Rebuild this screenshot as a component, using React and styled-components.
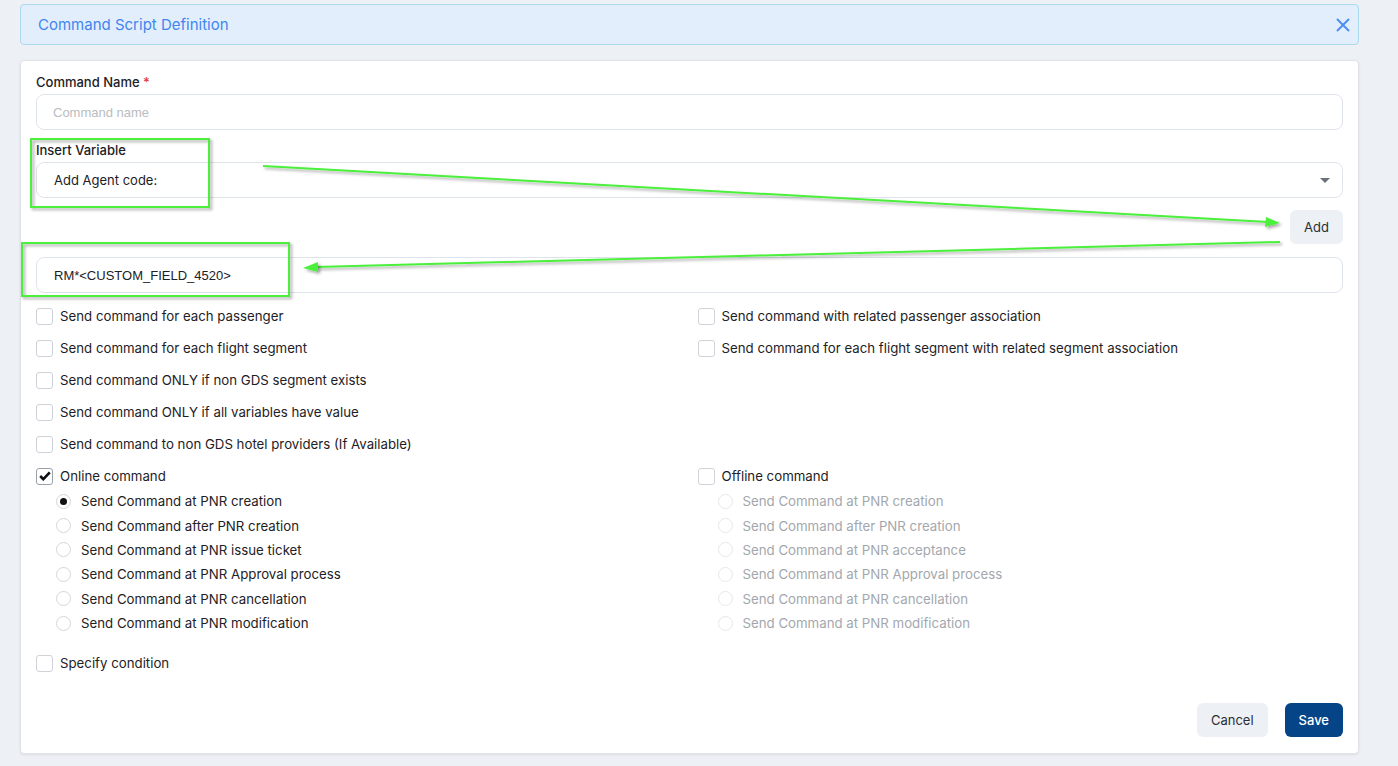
import React from "react";
import styled, { createGlobalStyle } from "styled-components";

const GlobalStyle = createGlobalStyle`
  html, body {
    margin: 0;
    padding: 0;
    background: #edf1f5;
    font-family: Inter, "Noto Sans", "Liberation Sans", sans-serif;
    color: #1d2125;
  }
  * { box-sizing: border-box; }
`;

const leftChecks = [
  "Send command for each passenger",
  "Send command for each flight segment",
  "Send command ONLY if non GDS segment exists",
  "Send command ONLY if all variables have value",
  "Send command to non GDS hotel providers (If Available)",
];

const rightChecks = [
  "Send command with related passenger association",
  "Send command for each flight segment with related segment association",
];

const onlineOptions = [
  "Send Command at PNR creation",
  "Send Command after PNR creation",
  "Send Command at PNR issue ticket",
  "Send Command at PNR Approval process",
  "Send Command at PNR cancellation",
  "Send Command at PNR modification",
];

const offlineOptions = [
  "Send Command at PNR creation",
  "Send Command after PNR creation",
  "Send Command at PNR acceptance",
  "Send Command at PNR Approval process",
  "Send Command at PNR cancellation",
  "Send Command at PNR modification",
];

const App = () => {
  return (
    <Page>
      <GlobalStyle />
      <Header>
        <HeaderTitle>Command Script Definition</HeaderTitle>
        <CloseButton aria-label="close">
          <svg width="14" height="14" viewBox="0 0 14 14">
            <path d="M1 1 L13 13 M13 1 L1 13" stroke="#4a90f0" strokeWidth="2" />
          </svg>
        </CloseButton>
      </Header>

      <Card>
        <Field>
          <Label>
            Command Name <Required>*</Required>
          </Label>
          <Input placeholder="Command name" />
        </Field>

        <Field>
          <Label>Insert Variable</Label>
          <SelectBox>
            <span>Add Agent code:</span>
            <Caret />
          </SelectBox>
        </Field>

        <AddRow>
          <GreyButton>Add</GreyButton>
        </AddRow>

        <ScriptInput defaultValue="RM*<CUSTOM_FIELD_4520>" />

        <Columns>
          <Column>
            {leftChecks.map(text => (
              <CheckRow key={text}>
                <Box />
                <CheckText>{text}</CheckText>
              </CheckRow>
            ))}
          </Column>
          <Column>
            {rightChecks.map(text => (
              <CheckRow key={text}>
                <Box />
                <CheckText>{text}</CheckText>
              </CheckRow>
            ))}
          </Column>
        </Columns>

        <Columns>
          <Column>
            <CheckRow>
              <Box checked>
                <svg width="12" height="10" viewBox="0 0 12 10">
                  <path d="M1.2 5 L4.3 8.2 L10.8 1.4" stroke="#111" strokeWidth="2.6" fill="none" />
                </svg>
              </Box>
              <CheckText>Online command</CheckText>
            </CheckRow>
            <RadioList>
              {onlineOptions.map((text, i) => (
                <RadioRow key={text}>
                  <Radio>{i === 0 && <Dot />}</Radio>
                  <RadioText>{text}</RadioText>
                </RadioRow>
              ))}
            </RadioList>
          </Column>
          <Column>
            <CheckRow>
              <Box />
              <CheckText>Offline command</CheckText>
            </CheckRow>
            <RadioList>
              {offlineOptions.map(text => (
                <RadioRow key={text}>
                  <Radio disabled />
                  <RadioText disabled>{text}</RadioText>
                </RadioRow>
              ))}
            </RadioList>
          </Column>
        </Columns>

        <ConditionRow>
          <Box />
          <CheckText>Specify condition</CheckText>
        </ConditionRow>

        <Footer>
          <GreyButton>Cancel</GreyButton>
          <SaveButton>Save</SaveButton>
        </Footer>
      </Card>

      <Annotations width="1398" height="766" viewBox="0 0 1398 766">
        <defs>
          <filter id="sh" x="-10%" y="-10%" width="120%" height="140%">
            <feDropShadow dx="2" dy="2" stdDeviation="1.5" floodColor="#000" floodOpacity="0.35" />
          </filter>
        </defs>
        <g filter="url(#sh)" stroke="#4cf03c" fill="none" strokeWidth="2">
          <rect x="31" y="139" width="178" height="68" />
          <rect x="22" y="243" width="267" height="53" />
          <path d="M263 166 L1268 222" />
          <path d="M1280 242 L316 267" />
        </g>
        <g filter="url(#sh)" fill="#4cf03c">
          <polygon points="1280,223 1266,217 1265,227" />
          <polygon points="303,268 318,262 318,272" />
        </g>
      </Annotations>
    </Page>
  );
};

export default App;

const Page = styled.div`
  position: relative;
  width: 1398px;
  min-height: 766px;
  padding: 4px 39px 12px 20px;
`;

const Header = styled.div`
  display: flex;
  align-items: center;
  justify-content: space-between;
  height: 41px;
  padding: 0 8px 0 17px;
  background: #e3eefd;
  border: 1px solid #a9d9ea;
  border-radius: 4px;
`;

const HeaderTitle = styled.div`
  font-size: 15px;
  color: #3f86ee;
`;

const CloseButton = styled.button`
  border: none;
  background: none;
  padding: 0;
  display: flex;
  cursor: pointer;
`;

const Card = styled.div`
  margin-top: 15px;
  background: #fff;
  border: 1px solid #dfe2e6;
  border-radius: 4px;
  box-shadow: 0 1px 3px rgba(0, 0, 0, 0.08);
  padding: 13px 15px 16px 15px;
`;

const Field = styled.div`
  display: flex;
  flex-direction: column;
  margin-bottom: 12px;
`;

const Label = styled.label`
  font-size: 13px;
  font-weight: 500;
  color: #1d2125;
  line-height: 16px;
  margin-bottom: 4px;
`;

const Required = styled.span`
  color: #e53935;
`;

const inputStyles = `
  width: 100%;
  height: 36px;
  border: 1px solid #dfe4ec;
  border-radius: 8px;
  padding: 0 16px;
  font-family: Inter, "Noto Sans", "Liberation Sans", sans-serif;
  font-size: 13px;
  color: #1d2125;
  outline: none;
  background: #fff;
`;

const Input = styled.input`
  ${inputStyles}
  font-family: "Liberation Sans", Arial, sans-serif;
  &::placeholder {
    color: #b9bcc0;
  }
`;

const ScriptInput = styled.input`
  ${inputStyles}
  font-family: "Liberation Sans", Arial, sans-serif;
  padding-left: 17px;
  margin-top: 1px;
  margin-bottom: 7px;
`;

const SelectBox = styled.div`
  ${inputStyles}
  display: flex;
  align-items: center;
  justify-content: space-between;
  padding: 0 12px 0 17px;
`;

const Caret = styled.span`
  width: 0;
  height: 0;
  border-left: 5px solid transparent;
  border-right: 5px solid transparent;
  border-top: 5px solid #6b7079;
`;

const AddRow = styled.div`
  display: flex;
  justify-content: flex-end;
  margin-bottom: 12px;
`;

const GreyButton = styled.button`
  height: 34px;
  padding: 0 14px;
  border: none;
  border-radius: 6px;
  background: #edf1f5;
  font-family: Inter, "Noto Sans", "Liberation Sans", sans-serif;
  font-size: 13px;
  color: #2a2e33;
  cursor: pointer;
`;

const SaveButton = styled(GreyButton)`
  background: #054487;
  color: #fff;
  padding: 0 14px;
  font-weight: 500;
`;

const Columns = styled.div`
  display: grid;
  grid-template-columns: 1fr 1fr;
  column-gap: 16px;
`;

const Column = styled.div`
  display: flex;
  flex-direction: column;
`;

const CheckRow = styled.div`
  display: flex;
  align-items: center;
  height: 32px;
  gap: 7px;
`;

const ConditionRow = styled(CheckRow)`
  margin-top: 12px;
`;

const Box = styled.span`
  width: 17px;
  height: 17px;
  flex-shrink: 0;
  border: 1px solid ${p => (p.checked ? "#9aa0a6" : "#cfd3d8")};
  border-radius: 3px;
  background: #fff;
  display: flex;
  align-items: center;
  justify-content: center;
`;

const CheckText = styled.span`
  font-size: 13.25px;
  color: #1d2125;
`;

const RadioList = styled.div`
  display: flex;
  flex-direction: column;
  padding-left: 20px;
  margin-top: -3px;
`;

const RadioRow = styled.div`
  display: flex;
  align-items: center;
  height: 24.4px;
  gap: 10px;
`;

const Radio = styled.span`
  width: 15px;
  height: 15px;
  flex-shrink: 0;
  border-radius: 50%;
  border: 1px solid ${p => (p.disabled ? "#e6e8eb" : "#d3d6da")};
  background: #fff;
  display: flex;
  align-items: center;
  justify-content: center;
`;

const Dot = styled.span`
  width: 7px;
  height: 7px;
  border-radius: 50%;
  background: #111;
`;

const RadioText = styled.span`
  font-size: 13.25px;
  color: ${p => (p.disabled ? "#a3a7ad" : "#1d2125")};
`;

const Footer = styled.div`
  display: flex;
  justify-content: flex-end;
  gap: 17px;
  margin-top: 24px;
`;

const Annotations = styled.svg`
  position: absolute;
  top: 0;
  left: 0;
  pointer-events: none;
`;
